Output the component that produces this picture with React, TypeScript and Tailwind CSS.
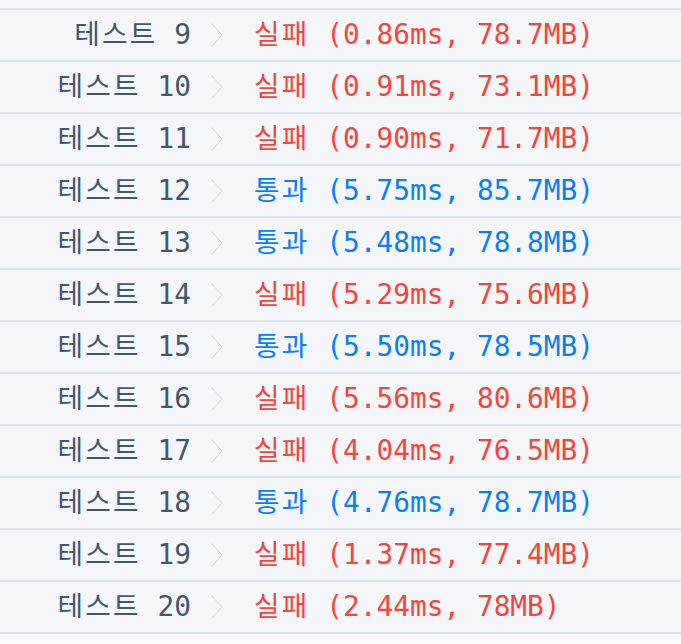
const rows = [
  { n: 9, pass: false, time: "0.86ms", mem: "78.7MB" },
  { n: 10, pass: false, time: "0.91ms", mem: "73.1MB" },
  { n: 11, pass: false, time: "0.90ms", mem: "71.7MB" },
  { n: 12, pass: true, time: "5.75ms", mem: "85.7MB" },
  { n: 13, pass: true, time: "5.48ms", mem: "78.8MB" },
  { n: 14, pass: false, time: "5.29ms", mem: "75.6MB" },
  { n: 15, pass: true, time: "5.50ms", mem: "78.5MB" },
  { n: 16, pass: false, time: "5.56ms", mem: "80.6MB" },
  { n: 17, pass: false, time: "4.04ms", mem: "76.5MB" },
  { n: 18, pass: true, time: "4.76ms", mem: "78.7MB" },
  { n: 19, pass: false, time: "1.37ms", mem: "77.4MB" },
  { n: 20, pass: false, time: "2.44ms", mem: "78MB" },
];

const mono = "font-['DejaVu_Sans_Mono','Noto_Sans_Mono_CJK_KR','Noto_Sans_CJK_KR',monospace]";

function Chevron() {
  return (
    <svg width="12" height="24" viewBox="0 0 12 24" className="shrink-0" aria-hidden>
      <polyline points="0.5,0.5 11,12 0.5,23.5" fill="none" stroke="#d2d7de" strokeWidth="1" />
    </svg>
  );
}

export default function App() {
  return (
    <div className={`min-h-screen bg-[#fafafc] ${mono} text-[27.8px]`}>
      <div className="h-2 bg-[#f5f6fa]" />
      {rows.map((r) => (
        <div key={r.n} className="flex h-[52px] items-center border-t-2 border-[#d9e3eb] bg-[#f5f6fa] whitespace-pre">
          <div className="w-[191px] shrink-0 text-right text-[#44566c]">
            <span className="font-light tracking-[2.2px]">테스트</span>
            {` ${r.n}`}
          </div>
          <div className="ml-[20px] flex">
            <Chevron />
          </div>
          <div className={`ml-[31px] ${r.pass ? "text-[#0a7ff5]" : "text-[#f3453d]"}`}>
            <span className="font-light tracking-[2.2px]">{r.pass ? "통과" : "실패"}</span>
            {` (${r.time}, ${r.mem})`}
          </div>
        </div>
      ))}
      <div className="border-t-2 border-[#d9e3eb]" />
    </div>
  );
}
